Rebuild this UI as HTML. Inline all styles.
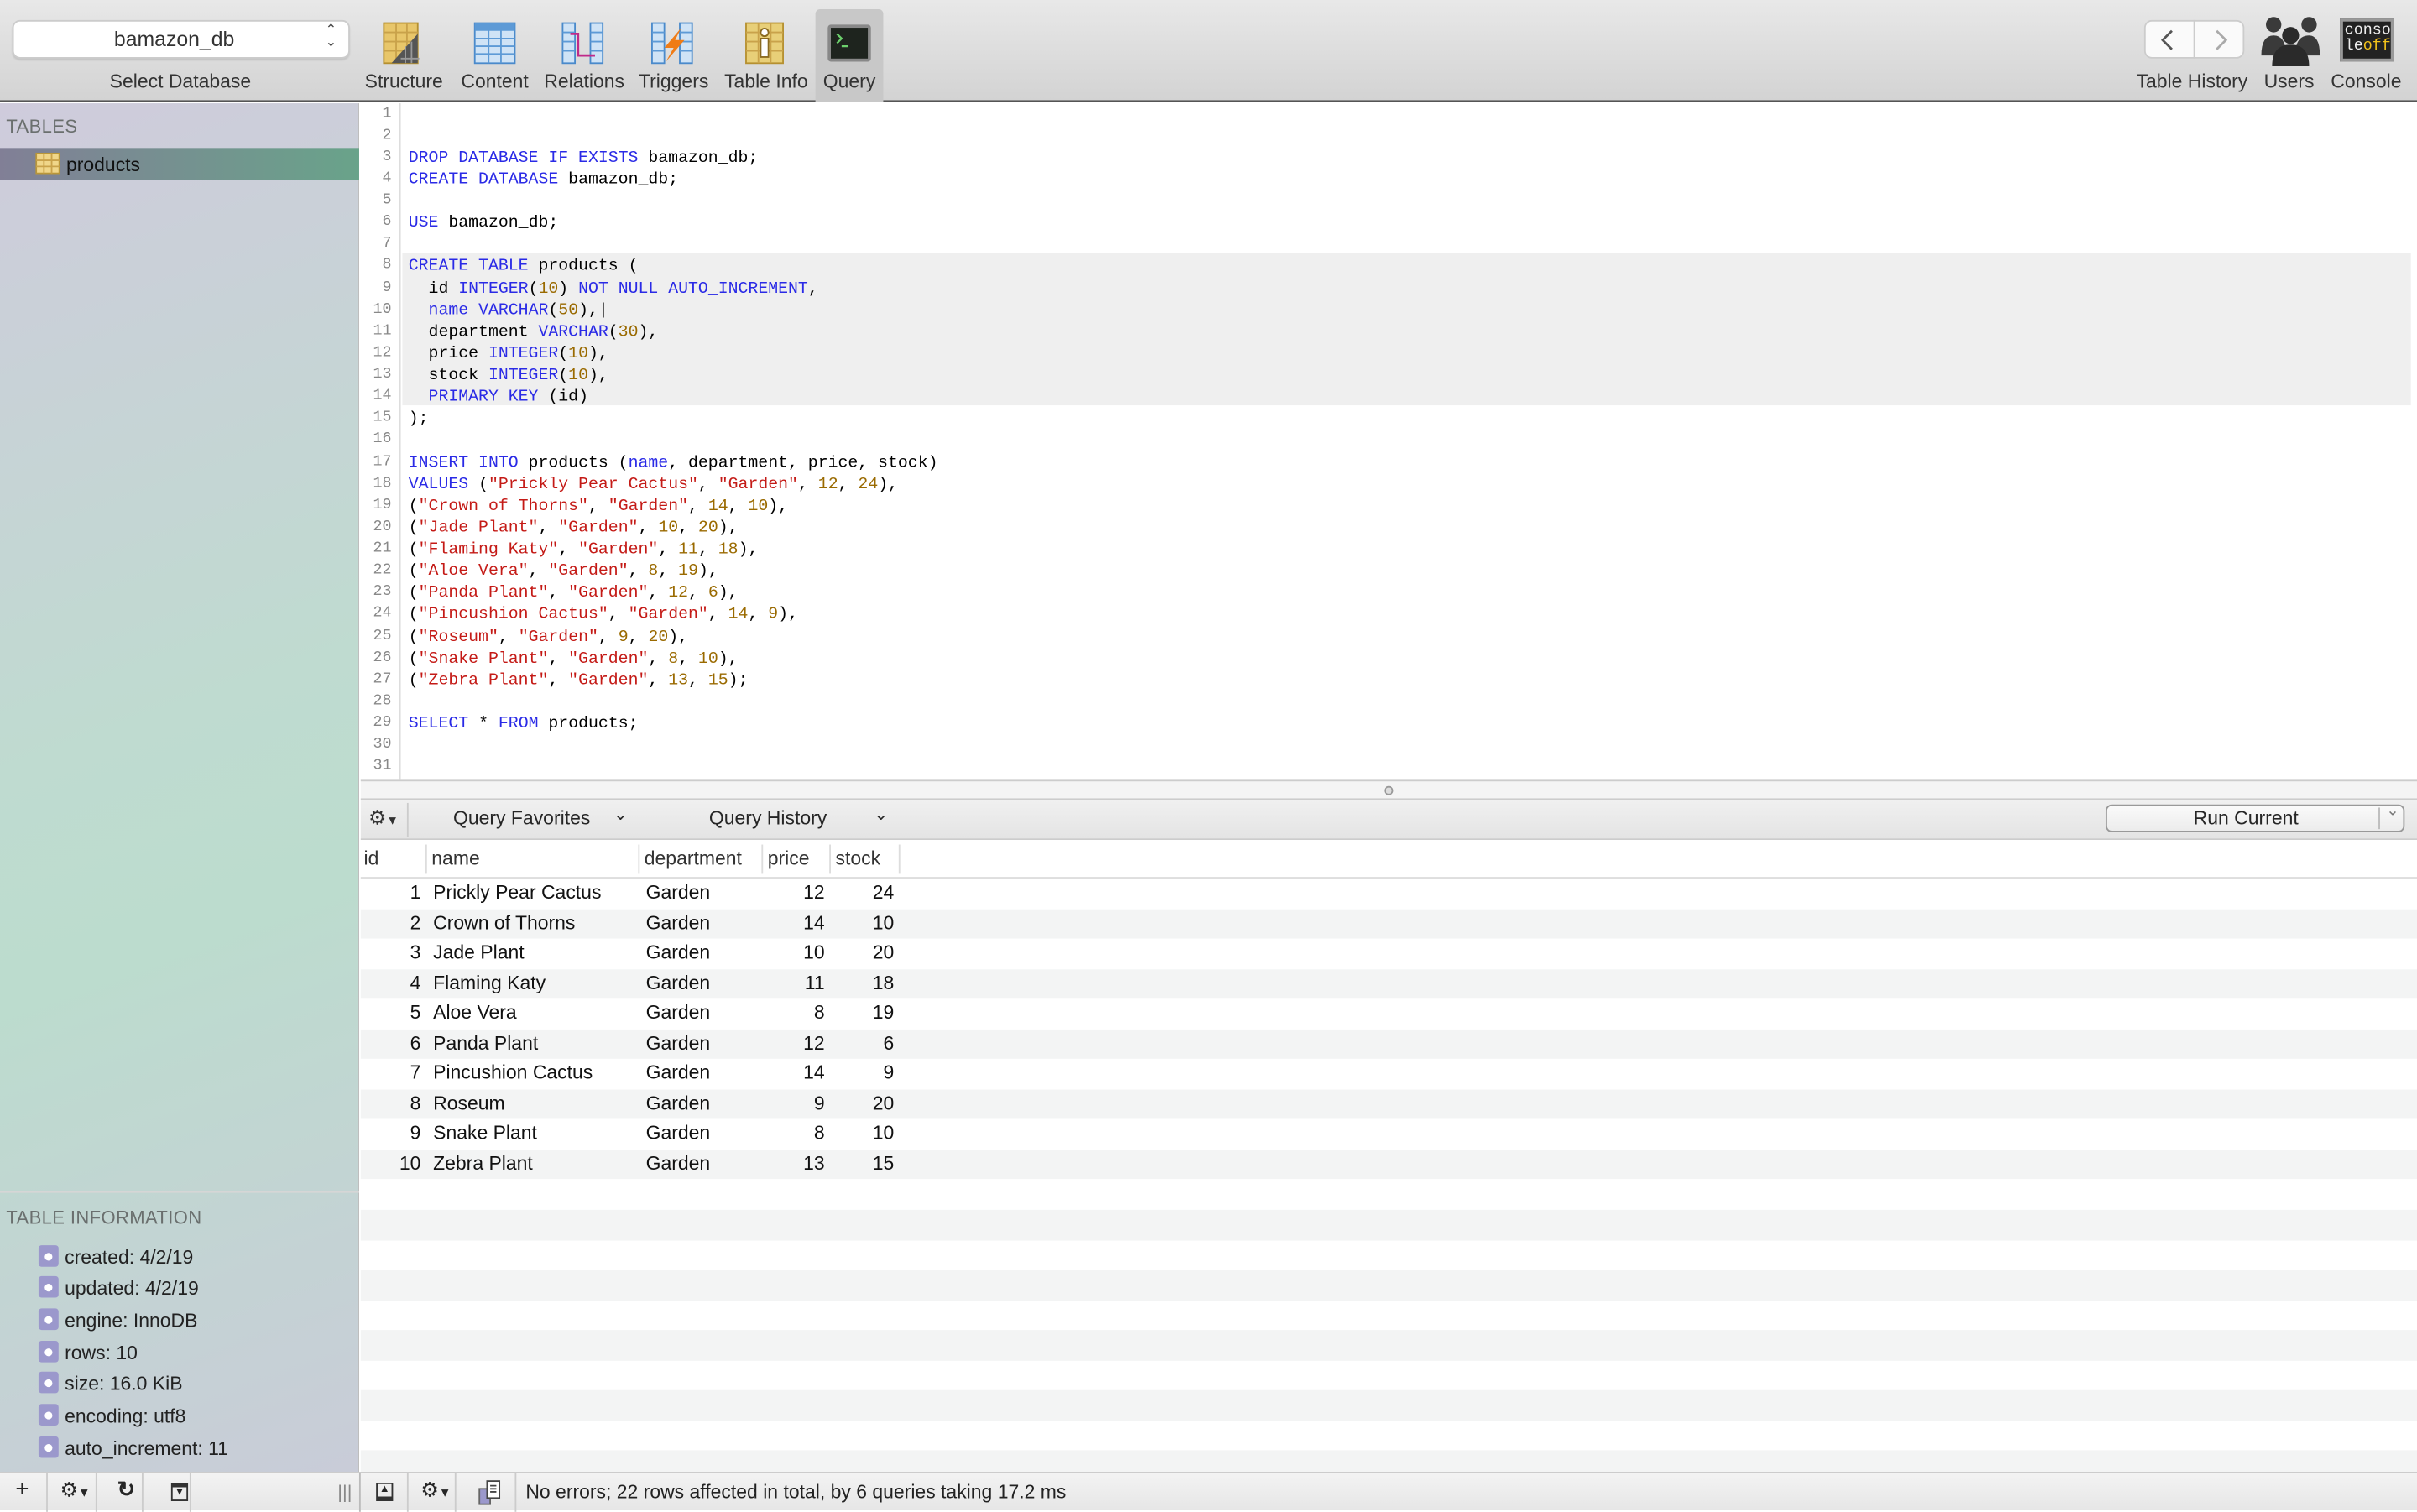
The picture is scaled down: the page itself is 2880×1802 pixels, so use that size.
<!DOCTYPE html>
<html><head><meta charset="utf-8"><style>
*{box-sizing:border-box;margin:0;padding:0}
html,body{width:2880px;height:1800px;overflow:hidden;background:#fff}
#w{position:absolute;left:0;top:0;width:1568px;height:980px;transform:scale(1.83674);transform-origin:0 0;font-family:"Liberation Sans",sans-serif;font-size:12.5px;color:#262626}
.a{position:absolute}
#tb{left:0;top:0;width:1568px;height:66px;background:linear-gradient(#e8e8e8,#d3d3d3);border-bottom:1px solid #555}
.lbl{position:absolute;top:46px;font-size:12.5px;color:#333;white-space:nowrap;transform:translateX(-50%)}
#side{left:0;top:67px;width:233px;height:888px;background:linear-gradient(160deg,#cfcbdc 0%,#bfdbd0 45%,#bcdcce 60%,#c9ccd8 100%);border-right:1px solid #bbb}
.sh{position:absolute;left:4px;font-size:12px;color:#6a6f6e;letter-spacing:.2px}
.info{position:absolute;left:25px;font-size:12.5px;color:#222;white-space:nowrap}
.info i{display:inline-block;width:13px;height:14px;background:#9b98cc;border-radius:2px;vertical-align:-2px;margin-right:4px;position:relative}
.info i:after{content:"";position:absolute;left:4px;top:4.5px;width:5px;height:5px;border-radius:50%;background:#fff}
#ed{left:234px;top:67px;width:1334px;height:439px;background:#fff;font-family:"Liberation Mono",monospace;font-size:10.8px}
#gut{position:absolute;left:0;top:0;width:26px;height:439px;border-right:1px solid #ddd}
.ln{position:absolute;height:14.13px;line-height:14.13px;white-space:pre}
.num{left:0;width:20px;text-align:right;color:#888;font-size:10px}
.code{left:31px;color:#000}
.k{color:#2a2ae6}.s{color:#c41a16}.n{color:#9a6a00}
#split{left:234px;top:506px;width:1334px;height:13px;background:#f4f4f4;border-top:1px solid #ccc;border-bottom:1px solid #ccc}
#qb{left:234px;top:519px;width:1334px;height:26px;background:linear-gradient(#f0f0f0,#e4e4e4);border-bottom:1px solid #ccc}
#hdr{left:234px;top:545px;width:1334px;height:25px;background:#fff;border-bottom:1px solid #ddd}
.hc{position:absolute;top:5px;font-size:12.5px;color:#333}
.sep{position:absolute;top:3px;width:1px;height:19px;background:#ddd}
.row{position:absolute;left:234px;width:1334px;height:19.55px;line-height:19.55px;font-size:12.5px;color:#111}
.row.e{background:#f3f4f4}
.c{position:absolute;white-space:nowrap}
#bot{left:0;top:955px;width:1568px;height:25px;background:linear-gradient(#f3f3f3,#e6e6e6);border-top:1px solid #c8c8c8}
.bs{position:absolute;top:0;width:1px;height:25px;background:#ccc}
</style></head><body><div id="w">

<div id="tb" class="a">
  <div class="a" style="left:8px;top:13px;width:219px;height:25px;background:#fff;border:1px solid #ccc;border-radius:5px;box-shadow:0 1px 1px rgba(0,0,0,.1)"></div>
  <div class="a" style="left:74px;top:18px;font-size:13.5px;color:#333">bamazon_db</div>
  <div class="a" style="left:211px;top:15px;font-size:9px;color:#444;line-height:8px">&#8963;<br>&#8964;</div>
  <div class="lbl" style="left:117px">Select Database</div>

  <!-- Structure -->
  <svg class="a" style="left:248px;top:14px" width="28" height="28" viewBox="0 0 28 28"><rect x="1" y="1" width="22" height="26" fill="#e8c66a" stroke="#b59030"/><path d="M1 7h22M1 13h22M1 19h22M9 1v26M16 1v26" stroke="#c9a24a" stroke-width="1"/><path d="M6 27L23 8V27Z" fill="#555"/><path d="M12 24h12M15 16v11M19 13v14" stroke="#999" stroke-width="1"/></svg>
  <div class="lbl" style="left:262px">Structure</div>
  <!-- Content -->
  <svg class="a" style="left:307px;top:14px" width="28" height="28" viewBox="0 0 28 28"><rect x="1" y="1" width="26" height="26" fill="#cfe3f6" stroke="#4a8acb"/><rect x="1" y="1" width="26" height="5" fill="#5d9ad6"/><path d="M1 11h26M1 16h26M1 21h26M10 1v26M18 1v26" stroke="#5d9ad6"/></svg>
  <div class="lbl" style="left:321px">Content</div>
  <!-- Relations -->
  <svg class="a" style="left:364px;top:14px" width="28" height="28" viewBox="0 0 28 28"><rect x="1" y="1" width="8" height="26" fill="#cfe3f6" stroke="#4a8acb"/><rect x="19" y="1" width="8" height="26" fill="#cfe3f6" stroke="#4a8acb"/><path d="M1 7h8M1 13h8M1 19h8M19 7h8M19 13h8M19 19h8" stroke="#5d9ad6"/><path d="M6 8h5v14h11" stroke="#c02a8a" stroke-width="1.5" fill="none"/></svg>
  <div class="lbl" style="left:379px">Relations</div>
  <!-- Triggers -->
  <svg class="a" style="left:422px;top:14px" width="28" height="28" viewBox="0 0 28 28"><rect x="1" y="1" width="8" height="26" fill="#cfe3f6" stroke="#4a8acb"/><rect x="19" y="1" width="8" height="26" fill="#cfe3f6" stroke="#4a8acb"/><path d="M1 7h8M1 13h8M1 19h8M19 7h8M19 13h8M19 19h8" stroke="#5d9ad6"/><path d="M20 4L9 17h6l-5 9 12-14h-6z" fill="#f07c16"/></svg>
  <div class="lbl" style="left:437px">Triggers</div>
  <!-- Table Info -->
  <svg class="a" style="left:483px;top:14px" width="28" height="28" viewBox="0 0 28 28"><rect x="1" y="1" width="24" height="26" fill="#e8cf78" stroke="#b59030"/><path d="M1 7h24M1 13h24M1 19h24M9 1v26M17 1v26" stroke="#c9a24a"/><circle cx="13" cy="7" r="2.5" fill="#fff" stroke="#8a6a20"/><rect x="10.5" y="11" width="5" height="12" fill="#fff" stroke="#8a6a20"/></svg>
  <div class="lbl" style="left:497px">Table Info</div>
  <!-- Query -->
  <div class="a" style="left:529px;top:6px;width:44px;height:60px;background:#c8c8c8;border-radius:3px 3px 0 0"></div>
  <svg class="a" style="left:536px;top:14px" width="30" height="28" viewBox="0 0 30 28"><rect x="1" y="2" width="28" height="24" rx="2" fill="#888"/><rect x="3" y="4" width="24" height="20" fill="#1e241e"/><path d="M7 8l3 3-3 3M10 16h4" stroke="#6cd06c" stroke-width="1.2" fill="none"/></svg>
  <div class="lbl" style="left:551px">Query</div>

  <!-- history -->
  <div class="a" style="left:1391px;top:13px;width:65px;height:25px;background:#fafafa;border:1px solid #ccc;border-radius:5px"></div>
  <div class="a" style="left:1423px;top:13px;width:1px;height:25px;background:#ccc"></div>
  <svg class="a" style="left:1400px;top:18px" width="48" height="16" viewBox="0 0 48 16"><path d="M9 2L3 8l6 6" stroke="#555" stroke-width="1.5" fill="none"/><path d="M38 2l6 6-6 6" stroke="#aaa" stroke-width="1.5" fill="none"/></svg>
  <div class="lbl" style="left:1422px">Table History</div>
  <svg class="a" style="left:1467px;top:8px" width="38" height="35" viewBox="0 0 38 35"><g fill="#3a3a3a"><circle cx="8" cy="8" r="5"/><path d="M0 28q0-13 8-13 8 0 8 13z"/><circle cx="31" cy="8" r="5"/><path d="M22 28q0-13 9-13 7 0 7 13z"/></g><g fill="#2a2a2a"><circle cx="19" cy="15" r="5.5"/><path d="M7 35q0-14 12-14 12 0 12 14z"/></g></svg>
  <div class="lbl" style="left:1485px">Users</div>
  <div class="a" style="left:1518px;top:12px;width:35px;height:28px;background:#222;border:2px solid #999;font-family:'Liberation Mono',monospace;font-size:10px;line-height:10px;padding:2px 1px;color:#eee">conso<br>le<span style="color:#f3c21b">off</span></div>
  <div class="lbl" style="left:1535px">Console</div>
</div>

<div id="side" class="a">
  <div class="sh" style="top:8px">TABLES</div>
  <div class="a" style="left:0;top:29px;width:233px;height:21px;background:linear-gradient(90deg,#817f96,#69a38a)"></div>
  <svg class="a" style="left:23px;top:32px" width="16" height="14" viewBox="0 0 16 14"><rect x=".5" y=".5" width="15" height="13" fill="#f0d689" stroke="#b8963a"/><path d="M.5 5h15M.5 9h15M5.5 .5v13M10.5 .5v13" stroke="#c9a24a"/></svg>
  <div class="a" style="left:43px;top:33px;font-size:12.5px;color:#111">products</div>
  <div class="a" style="left:0;top:706px;width:233px;height:1px;background:#d6d6d6"></div>
  <div class="sh" style="top:716px">TABLE INFORMATION</div>
  <div class="info" style="top:741px"><i></i>created: 4/2/19</div>
  <div class="info" style="top:761px"><i></i>updated: 4/2/19</div>
  <div class="info" style="top:782px"><i></i>engine: InnoDB</div>
  <div class="info" style="top:803px"><i></i>rows: 10</div>
  <div class="info" style="top:823px"><i></i>size: 16.0 KiB</div>
  <div class="info" style="top:844px"><i></i>encoding: utf8</div>
  <div class="info" style="top:865px"><i></i>auto_increment: 11</div>
</div>

<div id="ed" class="a">
  <div class="a" style="left:27px;top:97px;width:1303px;height:99px;background:#efefef"></div>
  <div id="gut"></div>
  <div id="lines"></div>
</div>

<div id="split" class="a"><div class="a" style="left:664px;top:3px;width:6px;height:6px;border-radius:50%;border:1px solid #999;background:#ddd"></div></div>

<div id="qb" class="a">
  <div class="a" style="left:5px;top:4px;font-size:13px;color:#333">&#9881;<span style="font-size:8px">&#9660;</span></div>
  <div class="a" style="left:30px;top:2px;width:1px;height:22px;background:#ccc"></div>
  <div class="a" style="left:60px;top:5px;font-size:12.5px">Query Favorites</div>
  <div class="a" style="left:164px;top:3px;font-size:11px">&#8964;</div>
  <div class="a" style="left:226px;top:5px;font-size:12.5px">Query History</div>
  <div class="a" style="left:333px;top:3px;font-size:11px">&#8964;</div>
  <div class="a" style="left:1132px;top:3px;width:194px;height:18px;border:1px solid #999;border-radius:4px;background:linear-gradient(#fafafa,#ececec)"></div>
  <div class="a" style="left:1189px;top:5px;font-size:12.5px">Run Current</div>
  <div class="a" style="left:1309px;top:5px;width:1px;height:14px;background:#bbb"></div>
  <div class="a" style="left:1314px;top:2px;font-size:10px;color:#777">&#8964;</div>
</div>

<div id="hdr" class="a">
  <div class="hc" style="left:2px">id</div><div class="sep" style="left:42px"></div>
  <div class="hc" style="left:46px">name</div><div class="sep" style="left:180px"></div>
  <div class="hc" style="left:184px">department</div><div class="sep" style="left:260px"></div>
  <div class="hc" style="left:264px">price</div><div class="sep" style="left:304px"></div>
  <div class="hc" style="left:308px">stock</div><div class="sep" style="left:349px"></div>
</div>
<div id="rows"></div>

<div id="bot" class="a">
  <div class="a" style="left:10px;top:2px;font-size:15px">+</div><div class="bs" style="left:30px"></div>
  <div class="a" style="left:39px;top:3px;font-size:13px">&#9881;<span style="font-size:8px">&#9660;</span></div><div class="bs" style="left:62px"></div>
  <div class="a" style="left:76px;top:2px;font-size:14px;font-weight:bold">&#8635;</div><div class="bs" style="left:92px"></div>
  <div class="a" style="left:111px;top:6px;width:11px;height:12px;border:1px solid #333;border-top:3px solid #333;font-size:7px;text-align:center;line-height:8px">&#9660;</div><div class="bs" style="left:123px"></div>
  <div class="a" style="left:219px;top:5px;font-size:12px;color:#888">|||</div>
  <div class="a" style="left:233px;top:0;width:1px;height:25px;background:#bbb"></div>
  <div class="a" style="left:244px;top:6px;width:11px;height:12px;border:1px solid #333;border-bottom:3px solid #333;font-size:7px;text-align:center;line-height:8px">&#9650;</div><div class="bs" style="left:264px"></div>
  <div class="a" style="left:273px;top:3px;font-size:13px">&#9881;<span style="font-size:8px">&#9660;</span></div><div class="bs" style="left:295px"></div>
  <svg class="a" style="left:310px;top:4px" width="16" height="17" viewBox="0 0 16 17"><rect x="1" y="6" width="7" height="10" fill="#9b98cc" stroke="#666"/><rect x="6" y="1" width="8" height="11" fill="#fff" stroke="#444"/><path d="M8 4h4M8 6h4M8 8h4" stroke="#444"/></svg>
  <div class="bs" style="left:334px"></div>
  <div class="a" style="left:341px;top:5px;font-size:12.5px;color:#222">No errors; 22 rows affected in total, by 6 queries taking 17.2 ms</div>
</div>

</div>
<script>
var L=["","",
'<span class="k">DROP DATABASE IF EXISTS</span> bamazon_db;',
'<span class="k">CREATE DATABASE</span> bamazon_db;',"",
'<span class="k">USE</span> bamazon_db;',"",
'<span class="k">CREATE TABLE</span> products (',
'  id <span class="k">INTEGER</span>(<span class="n">10</span>) <span class="k">NOT NULL AUTO_INCREMENT</span>,',
'  <span class="k">name</span> <span class="k">VARCHAR</span>(<span class="n">50</span>),|',
'  department <span class="k">VARCHAR</span>(<span class="n">30</span>),',
'  price <span class="k">INTEGER</span>(<span class="n">10</span>),',
'  stock <span class="k">INTEGER</span>(<span class="n">10</span>),',
'  <span class="k">PRIMARY KEY</span> (id)',
');',"",
'<span class="k">INSERT INTO</span> products (<span class="k">name</span>, department, price, stock)'];
var D=[["Prickly Pear Cactus",12,24],["Crown of Thorns",14,10],["Jade Plant",10,20],["Flaming Katy",11,18],["Aloe Vera",8,19],["Panda Plant",12,6],["Pincushion Cactus",14,9],["Roseum",9,20],["Snake Plant",8,10],["Zebra Plant",13,15]];
D.forEach(function(d,i){L.push((i==0?'<span class="k">VALUES</span> ':'')+'(<span class="s">"'+d[0]+'"</span>, <span class="s">"Garden"</span>, <span class="n">'+d[1]+'</span>, <span class="n">'+d[2]+'</span>)'+(i==9?';':','));});
L.push("",'<span class="k">SELECT</span> * <span class="k">FROM</span> products;',"","");
var h="";L.forEach(function(t,i){var y=(i*14.13+0.5).toFixed(2);h+='<div class="ln num" style="top:'+y+'px">'+(i+1)+'</div><div class="ln code" style="top:'+y+'px">'+t+'</div>';});
document.getElementById("lines").innerHTML=h;
var r="";for(var i=0;i<20;i++){var y=570+i*19.55;var d=D[i];r+='<div class="row'+(i%2?' e':'')+'" style="top:'+y+'px">';if(d){r+='<span class="c" style="right:'+(1334-39)+'px">'+(i+1)+'</span><span class="c" style="left:47px">'+d[0]+'</span><span class="c" style="left:185px">Garden</span><span class="c" style="right:'+(1334-301)+'px">'+d[1]+'</span><span class="c" style="right:'+(1334-346)+'px">'+d[2]+'</span>';}r+='</div>';}
document.getElementById("rows").innerHTML=r;
</script>
</body></html>
